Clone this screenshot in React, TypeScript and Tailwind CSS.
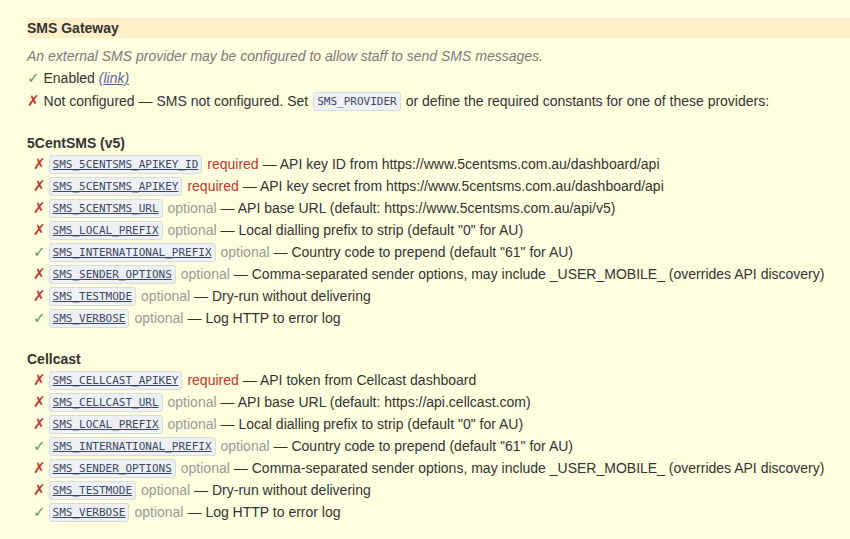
import React from 'react';

type Item = { ok: boolean; name: string; required: boolean; desc: string };

const fiveCent: Item[] = [
  { ok: false, name: 'SMS_5CENTSMS_APIKEY_ID', required: true, desc: 'API key ID from https://www.5centsms.com.au/dashboard/api' },
  { ok: false, name: 'SMS_5CENTSMS_APIKEY', required: true, desc: 'API key secret from https://www.5centsms.com.au/dashboard/api' },
  { ok: false, name: 'SMS_5CENTSMS_URL', required: false, desc: 'API base URL (default: https://www.5centsms.com.au/api/v5)' },
  { ok: false, name: 'SMS_LOCAL_PREFIX', required: false, desc: 'Local dialling prefix to strip (default "0" for AU)' },
  { ok: true, name: 'SMS_INTERNATIONAL_PREFIX', required: false, desc: 'Country code to prepend (default "61" for AU)' },
  { ok: false, name: 'SMS_SENDER_OPTIONS', required: false, desc: 'Comma-separated sender options, may include _USER_MOBILE_ (overrides API discovery)' },
  { ok: false, name: 'SMS_TESTMODE', required: false, desc: 'Dry-run without delivering' },
  { ok: true, name: 'SMS_VERBOSE', required: false, desc: 'Log HTTP to error log' },
];

const cellcast: Item[] = [
  { ok: false, name: 'SMS_CELLCAST_APIKEY', required: true, desc: 'API token from Cellcast dashboard' },
  { ok: false, name: 'SMS_CELLCAST_URL', required: false, desc: 'API base URL (default: https://api.cellcast.com)' },
  { ok: false, name: 'SMS_LOCAL_PREFIX', required: false, desc: 'Local dialling prefix to strip (default "0" for AU)' },
  { ok: true, name: 'SMS_INTERNATIONAL_PREFIX', required: false, desc: 'Country code to prepend (default "61" for AU)' },
  { ok: false, name: 'SMS_SENDER_OPTIONS', required: false, desc: 'Comma-separated sender options, may include _USER_MOBILE_ (overrides API discovery)' },
  { ok: false, name: 'SMS_TESTMODE', required: false, desc: 'Dry-run without delivering' },
  { ok: true, name: 'SMS_VERBOSE', required: false, desc: 'Log HTTP to error log' },
];

function Mark({ ok }: { ok: boolean }) {
  return ok ? (
    <span className="text-[#4f9a62] font-['DejaVu_Sans',sans-serif] text-[15px]">✓</span>
  ) : (
    <span className="text-[#c0392b] font-['DejaVu_Sans',sans-serif] text-[15px]">✗</span>
  );
}

const codeCls =
  "inline-block px-[3px] h-[19px] leading-[17px] text-[11px] font-['DejaVu_Sans_Mono','Liberation_Mono',monospace] text-[#3d4766] bg-[#eef1f4] border border-[#d6dbe4] rounded-[3px]";

function Provider({ title, items }: { title: string; items: Item[] }) {
  return (
    <div className="mt-[20px]">
      <h3 className="font-bold leading-[20px]">{title}</h3>
      <ul>
        {items.map((it, i) => (
          <li key={i} className="flex items-center h-[22px] pl-[6px] whitespace-nowrap">
            <Mark ok={it.ok} />
            <code className={`${codeCls} ml-[3px] underline underline-offset-[1px] decoration-[#3d4766]`}>{it.name}</code>
            <span className={`ml-[5px] ${it.required ? 'text-[#c0392b]' : 'text-[#9a9a9a]'}`}>
              {it.required ? 'required' : 'optional'}
            </span>
            <span className="ml-[4px]">— {it.desc}</span>
          </li>
        ))}
      </ul>
    </div>
  );
}

export default function App() {
  return (
    <div className="min-h-screen bg-[#fffedf] pt-[18px] pl-[27px] text-[14px] text-[#333] font-['Liberation_Sans',Arial,sans-serif]">
      <h2 className="bg-[#feefc9] font-bold h-[20px] leading-[20px]">SMS Gateway</h2>
      <p className="mt-[7px] leading-[22px] italic text-[#7a7a7a]">
        An external SMS provider may be configured to allow staff to send SMS messages.
      </p>
      <div className="leading-[22px]">
        <Mark ok={true} /> Enabled{' '}
        <a className="italic underline text-[#5a6794]">(link)</a>
      </div>
      <div className="flex items-center h-[24px] whitespace-nowrap">
        <Mark ok={false} />
        <span className="ml-[4px]">Not configured — SMS not configured. Set</span>
        <code className={`${codeCls} mx-[5px]`}>SMS_PROVIDER</code>
        <span>or define the required constants for one of these providers:</span>
      </div>
      <Provider title="5CentSMS (v5)" items={fiveCent} />
      <Provider title="Cellcast" items={cellcast} />
    </div>
  );
}
